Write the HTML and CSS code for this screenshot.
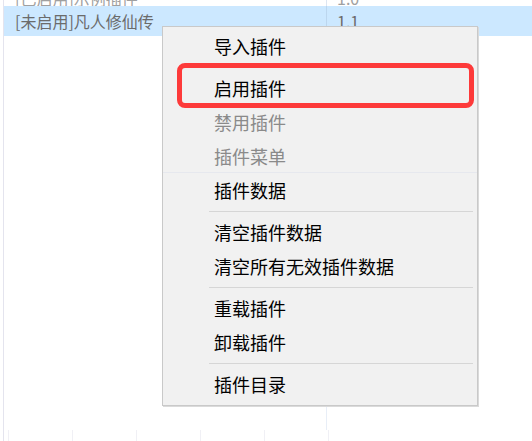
FILE: index.html
```html
<!DOCTYPE html>
<html lang="zh-CN">
<head>
<meta charset="utf-8">
<title>插件列表</title>
<link rel="stylesheet" href="styles.css">
</head>
<body>
<div class="screen">
  <div class="view">
    <div class="row prev">
      <div class="cell name">[已启用]示例插件</div>
      <div class="cell ver">1.0</div>
    </div>
    <div class="row sel">
      <div class="cell name">[未启用]凡人修仙传</div>
      <div class="cell ver">1.1</div>
    </div>
    <div class="fill">
      <div class="fcol"></div>
      <div class="fcol second"></div>
    </div>
    <div class="grid-strip">
      <span></span><span></span><span></span><span></span><span></span><span></span>
    </div>
  </div>

  <div class="menu">
    <div class="item">导入插件</div>
    <div class="sep"></div>
    <div class="item">启用插件</div>
    <div class="item disabled">禁用插件</div>
    <div class="item disabled faint">插件菜单</div>
    <div class="item">插件数据</div>
    <div class="sep"></div>
    <div class="item">清空插件数据</div>
    <div class="item">清空所有无效插件数据</div>
    <div class="sep"></div>
    <div class="item">重载插件</div>
    <div class="item">卸载插件</div>
    <div class="sep"></div>
    <div class="item">插件目录</div>
  </div>

  <div class="mark"></div>
</div>
</body>
</html>
```

FILE: styles.css
```css
html, body {
  margin: 0;
  padding: 0;
  background: #ffffff;
}

.screen {
  position: relative;
  width: 532px;
  height: 441px;
  overflow: hidden;
  font-family: "Noto Sans CJK SC", "Noto Sans", sans-serif;
}

.view {
  margin-left: 3px;
  height: 441px;
  border-left: 1px solid #e4e4ee;
  display: flex;
  flex-direction: column;
}

.row {
  display: grid;
  grid-template-columns: 322px 1fr;
  font-size: 16px;
  color: #6b6b6b;
}

.cell {
  white-space: nowrap;
}

.name {
  padding-left: 11px;
}

.ver {
  padding-left: 10px;
  border-left: 1px solid #dde6f2;
}

.prev {
  height: 6px;
  overflow: hidden;
  align-items: end;
}

.prev .cell {
  line-height: 16px;
  height: 6px;
  display: flex;
  align-items: flex-end;
  color: #a0a0a0;
}

.sel {
  height: 30px;
  line-height: 30px;
  background: #cce8ff;
}

.sel .ver {
  border-left-color: #bcd6ee;
}

.fill {
  flex: 1;
  display: grid;
  grid-template-columns: 322px 1fr;
}

.fcol.second {
  border-left: 1px solid #e8eef7;
}

.grid-strip {
  height: 11px;
  display: flex;
  padding-left: 4px;
}

.grid-strip span {
  width: 63px;
  border-left: 1px solid #f0f0f5;
}

.menu {
  position: absolute;
  left: 162px;
  top: 26px;
  width: 314px;
  padding: 2px 0 4px;
  background: #f1f1f1;
  border: 1px solid #c9c9c9;
  box-shadow: 1px 1px 0 #dadada;
}

.item {
  height: 34px;
  line-height: 34px;
  padding-left: 51px;
  font-size: 18px;
  color: #000000;
  white-space: nowrap;
}

.item.disabled {
  color: #8a8a8a;
}

.item.faint {
  box-shadow: inset 0 -1px 0 #e6e8ee;
}

.sep {
  height: 8px;
  display: flex;
  align-items: center;
  padding: 0 4px 0 46px;
}

.sep::before {
  content: "";
  flex: 1;
  height: 1px;
  background: #d6d6d6;
}

.mark {
  position: absolute;
  left: 177px;
  top: 63px;
  width: 287px;
  height: 35px;
  border: 5px solid #fd3a3a;
  border-radius: 8px;
}
```
